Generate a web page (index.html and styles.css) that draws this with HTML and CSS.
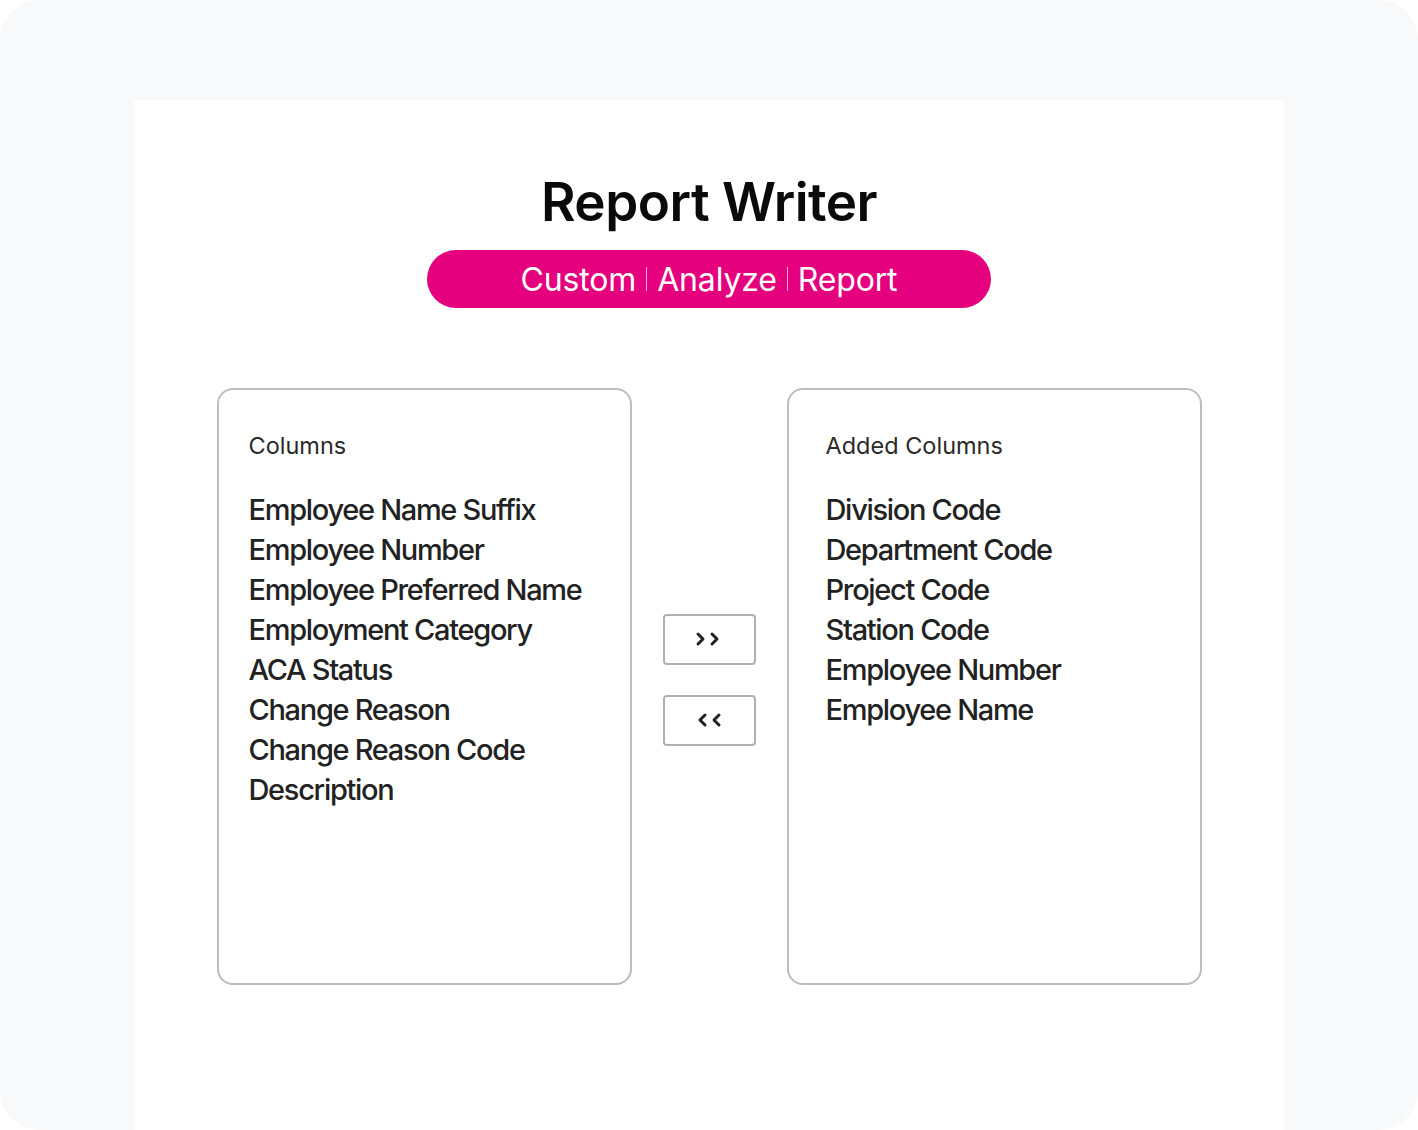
FILE: index.html
```html
<!DOCTYPE html>
<html lang="en">
  <head>
    <meta charset="UTF-8" />
    <meta name="viewport" content="width=device-width, initial-scale=1.0" />
    <title>Report Writer</title>
    <link rel="stylesheet" href="styles.css">
  </head>
  <body>
    <div class="frame">
      <div class="card">
        <h1 class="title">Report Writer</h1>
        <div class="pill">
          <span>Custom</span>
          <span class="pill-sep"></span>
          <span>Analyze</span>
          <span class="pill-sep"></span>
          <span>Report</span>
        </div>

        <div class="picker">
          <div class="list-box">
            <div class="list-label">Columns</div>
            <ul class="list-items">
              <li>Employee Name Suffix</li>
              <li>Employee Number</li>
              <li>Employee Preferred Name</li>
              <li>Employment Category</li>
              <li>ACA Status</li>
              <li>Change Reason</li>
              <li>Change Reason Code</li>
              <li>Description</li>
            </ul>
          </div>

          <div class="move-buttons">
            <button class="move-btn" title="Add">
              <svg width="30" height="18" viewBox="0 0 30 18">
                <polyline points="4,4 9,9 4,14" />
                <polyline points="18,4 23,9 18,14" />
              </svg>
            </button>
            <button class="move-btn" title="Remove">
              <svg width="30" height="18" viewBox="0 0 30 18">
                <polyline points="11,4 6,9 11,14" />
                <polyline points="25,4 20,9 25,14" />
              </svg>
            </button>
          </div>

          <div class="list-box list-box-added">
            <div class="list-label">Added Columns</div>
            <ul class="list-items">
              <li>Division Code</li>
              <li>Department Code</li>
              <li>Project Code</li>
              <li>Station Code</li>
              <li>Employee Number</li>
              <li>Employee Name</li>
            </ul>
          </div>
        </div>
      </div>
    </div>
  </body>
</html>
```

FILE: styles.css
```css
* {
  box-sizing: border-box;
}

body {
  margin: 0;
  background-color: #fff;
  font-family: Inter, "Noto Sans", sans-serif;
  color: #222;
}

.frame {
  height: 1130px;
  padding-top: 100px;
  border-radius: 40px;
  background-color: #f8f9fb;
  overflow: hidden;
}

.card {
  width: 1150px;
  height: 1100px;
  margin: 0 auto;
  padding-top: 72px;
  border-radius: 4px 4px 0 0;
  background-color: #fff;
  display: flex;
  flex-direction: column;
  align-items: center;
}

.title {
  margin: 0;
  font-size: 53px;
  font-weight: 600;
  line-height: 60px;
  letter-spacing: -0.01em;
  color: #0a0a0a;
}

.pill {
  width: 564px;
  height: 58px;
  margin-top: 18px;
  border-radius: 29px;
  background-color: #e5007e;
  color: #fff;
  font-size: 32px;
  font-weight: 400;
  letter-spacing: -0.005em;
  display: flex;
  align-items: center;
  justify-content: center;
  gap: 10px;
}

.pill-sep {
  width: 1px;
  height: 24px;
  background-color: #f7a6d0;
}

.picker {
  margin-top: 80px;
  display: flex;
  align-items: center;
  gap: 31px;
}

.list-box {
  width: 415px;
  height: 597px;
  padding: 42px 20px 0 30px;
  border: 2px solid #bdbdbd;
  border-radius: 16px;
}

.list-box-added {
  padding-left: 37px;
}

.list-label {
  font-size: 23.5px;
  line-height: 28px;
  color: #2a2a2a;
}

.list-items {
  margin: 30px 0 0;
  padding: 0;
  list-style: none;
}

.list-items li {
  font-size: 29px;
  font-weight: 500;
  line-height: 40px;
  letter-spacing: -0.045em;
  color: #222;
}

.move-buttons {
  margin-bottom: 14px;
  display: flex;
  flex-direction: column;
  gap: 30px;
}

.move-btn {
  width: 93px;
  height: 51px;
  padding: 0;
  border: 2px solid #b0b0b0;
  border-radius: 4px;
  background-color: #fff;
  display: flex;
  align-items: center;
  justify-content: center;
}

.move-btn svg {
  fill: none;
  stroke: #222;
  stroke-width: 3;
  stroke-linecap: round;
  stroke-linejoin: round;
}
```
